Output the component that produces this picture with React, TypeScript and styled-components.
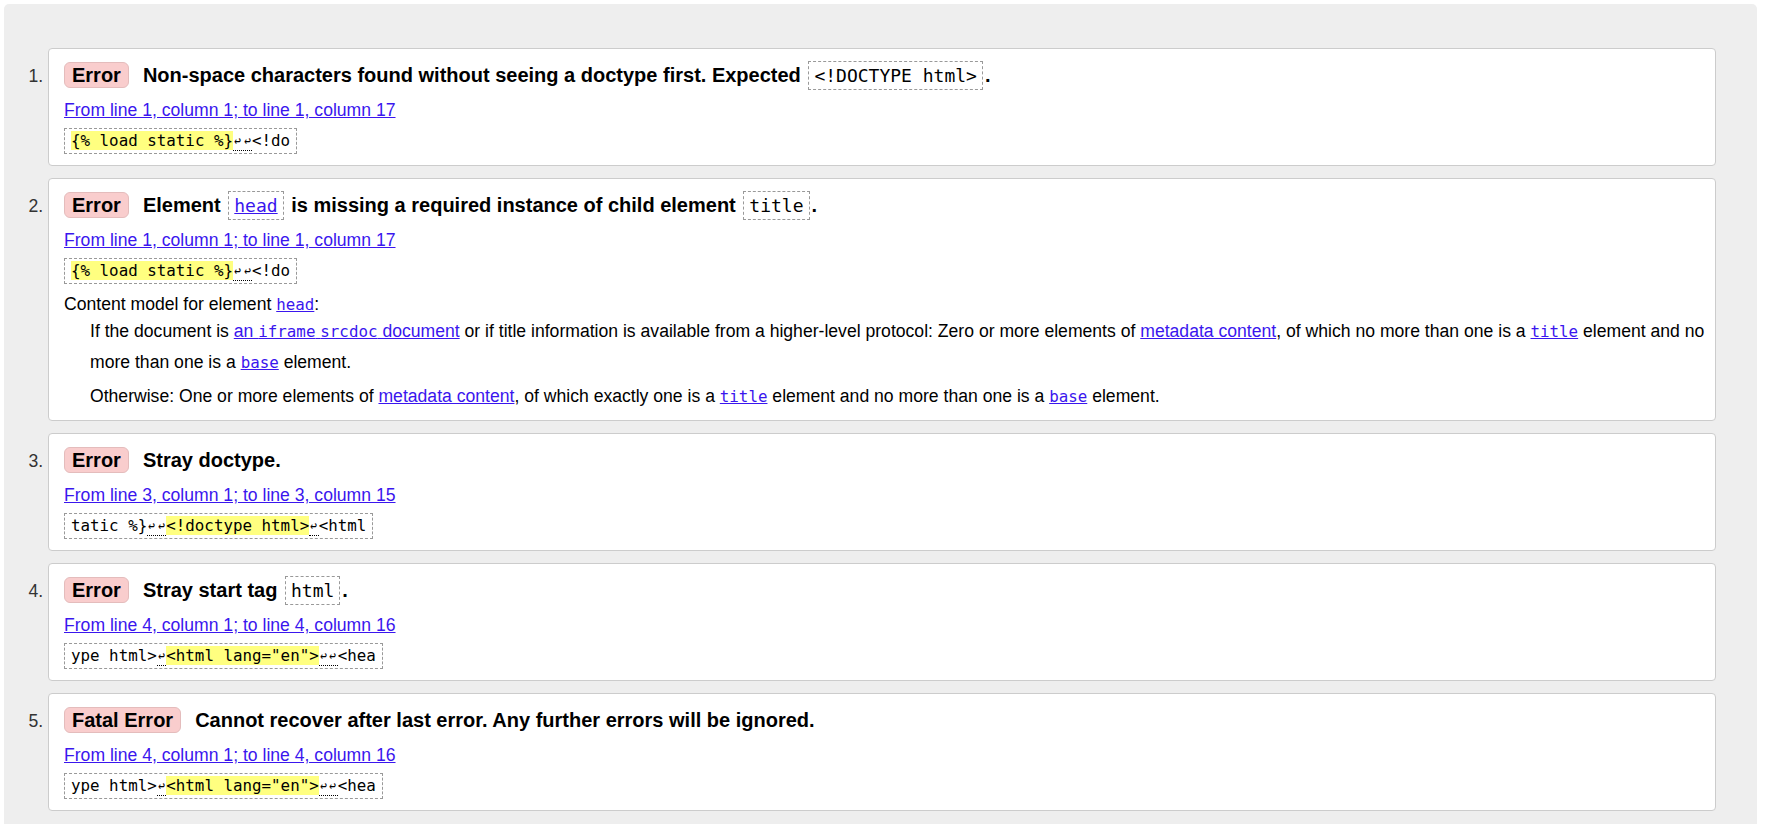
import React, { ReactNode } from "react";
import styled, { createGlobalStyle } from "styled-components";

const GlobalStyle = createGlobalStyle`
  html, body {
    margin: 0;
    padding: 0;
    background: #fff;
  }

  body {
    font-family: "Liberation Sans", Arial, sans-serif;
    font-size: 17.6px;
    color: #000;
  }
`;

const MONO = `"DejaVu Sans Mono", "Liberation Mono", monospace`;

type Extract = {
  before: string;
  beforeBreaks: number;
  mark: string;
  afterBreaks: number;
  after: string;
};

type Msg = {
  kind: string;
  title: ReactNode;
  location: string;
  extract: Extract;
  details?: ReactNode;
};

// the ↩ glyph, one monospace cell wide per line break
const Breaks = ({ count }: { count: number }) =>
  count > 0 ? (
    <LineBreak title="Line break">
      {Array.from({ length: count }, (_, i) => (
        <Arrow key={i}>↩</Arrow>
      ))}
    </LineBreak>
  ) : null;

const App = () => {
  return (
    <>
      <GlobalStyle />
      <Page>
        <MessageList>
          {messages.map((msg, i) => (
            <Message key={i}>
              <Title>
                <Badge>{msg.kind}</Badge>
                {msg.title}
              </Title>
              <Location>
                <Link href="#">{msg.location}</Link>
              </Location>
              <ExtractBox>
                {msg.extract.before}
                <Breaks count={msg.extract.beforeBreaks} />
                <Highlight>{msg.extract.mark}</Highlight>
                <Breaks count={msg.extract.afterBreaks} />
                {msg.extract.after}
              </ExtractBox>
              {msg.details}
            </Message>
          ))}
        </MessageList>
      </Page>
    </>
  );
};

export default App;

const Page = styled.main`
  margin: 4px 32px 0 4px;
  padding: 44px 41px 30px 44px;
  background: #eee;
  border-radius: 5px 5px 0 0;
`;

const MessageList = styled.ol`
  margin: 0;
  padding: 0;
  list-style: decimal outside;
`;

const Message = styled.li`
  background: #fff;
  border: 1px solid #ccc;
  border-radius: 4px;
  padding: 11px 15px;
  margin-bottom: 12px;

  &::marker {
    color: #333;
  }
`;

const Title = styled.p`
  margin: 0;
  font-size: 20px;
  font-weight: bold;
  line-height: 30px;
`;

const Badge = styled.strong`
  display: inline-block;
  margin-right: 14px;
  padding: 1px 7px;
  line-height: 22px;
  background: #f9cdcd;
  border: 1px solid #e4bcbc;
  border-radius: 6px;
`;

const Code = styled.code`
  font-family: ${MONO};
  font-size: 0.9em;
  font-weight: normal;
  line-height: 1;
`;

const TitleCode = styled(Code)`
  display: inline-block;
  margin: 0 2px;
  padding: 2px 5px;
  line-height: 23px;
  border: 1px dashed #999;
`;

const Link = styled.a`
  color: #3a16ee;
  text-decoration: underline;
`;

const Location = styled.p`
  margin: 8px 0 0;
  line-height: 24px;
`;

const ExtractBox = styled.p`
  width: fit-content;
  margin: 6px 0 0;
  padding: 2px 6px;
  border: 1px dashed #999;
  font-family: ${MONO};
  font-size: 15.84px;
  line-height: 20px;
  white-space: pre;
`;

const Highlight = styled.b`
  font-weight: normal;
  background: #ffff80;
`;

const LineBreak = styled.b`
  font-weight: normal;
  border-bottom: 1px dotted #000;
`;

const Arrow = styled.span`
  display: inline-block;
  width: 9.5px;
  text-align: center;
  line-height: 1;
  font-size: 15px;
  transform: scaleX(0.75);
`;

const Note = styled.p`
  margin: 8px 0 0;
  line-height: 24px;
`;

const ModelList = styled.dl`
  margin: 0 0 -3px;
`;

const ModelItem = styled.dd`
  margin: 0 -20px 0 26px;
  line-height: 31px;

  & + & {
    margin-top: 3px;
  }
`;

const headDetails = (
  <>
    <Note>
      Content model for element{" "}
      <Link href="#">
        <Code>head</Code>
      </Link>
      :
    </Note>
    <ModelList>
      <ModelItem>
        If the document is{" "}
        <Link href="#">
          an <Code>iframe</Code> <Code>srcdoc</Code> document
        </Link>{" "}
        or if title information is available from a higher-level protocol:
        Zero or more elements of <Link href="#">metadata content</Link>, of
        which no more than one is a{" "}
        <Link href="#">
          <Code>title</Code>
        </Link>{" "}
        element and no more than one is a{" "}
        <Link href="#">
          <Code>base</Code>
        </Link>{" "}
        element.
      </ModelItem>
      <ModelItem>
        Otherwise: One or more elements of{" "}
        <Link href="#">metadata content</Link>, of which exactly one is a{" "}
        <Link href="#">
          <Code>title</Code>
        </Link>{" "}
        element and no more than one is a{" "}
        <Link href="#">
          <Code>base</Code>
        </Link>{" "}
        element.
      </ModelItem>
    </ModelList>
  </>
);

const firstExtract: Extract = {
  before: "",
  beforeBreaks: 0,
  mark: "{% load static %}",
  afterBreaks: 2,
  after: "<!do",
};

const htmlExtract: Extract = {
  before: "ype html>",
  beforeBreaks: 1,
  mark: '<html lang="en">',
  afterBreaks: 2,
  after: "<hea",
};

const messages: Msg[] = [
  {
    kind: "Error",
    title: (
      <>
        Non-space characters found without seeing a doctype first. Expected{" "}
        <TitleCode>{"<!DOCTYPE html>"}</TitleCode>.
      </>
    ),
    location: "From line 1, column 1; to line 1, column 17",
    extract: firstExtract,
  },
  {
    kind: "Error",
    title: (
      <>
        Element{" "}
        <TitleCode>
          <Link href="#">head</Link>
        </TitleCode>{" "}
        is missing a required instance of child element{" "}
        <TitleCode>title</TitleCode>.
      </>
    ),
    location: "From line 1, column 1; to line 1, column 17",
    extract: firstExtract,
    details: headDetails,
  },
  {
    kind: "Error",
    title: "Stray doctype.",
    location: "From line 3, column 1; to line 3, column 15",
    extract: {
      before: "tatic %}",
      beforeBreaks: 2,
      mark: "<!doctype html>",
      afterBreaks: 1,
      after: "<html",
    },
  },
  {
    kind: "Error",
    title: (
      <>
        Stray start tag <TitleCode>html</TitleCode>.
      </>
    ),
    location: "From line 4, column 1; to line 4, column 16",
    extract: htmlExtract,
  },
  {
    kind: "Fatal Error",
    title: "Cannot recover after last error. Any further errors will be ignored.",
    location: "From line 4, column 1; to line 4, column 16",
    extract: htmlExtract,
  },
];
